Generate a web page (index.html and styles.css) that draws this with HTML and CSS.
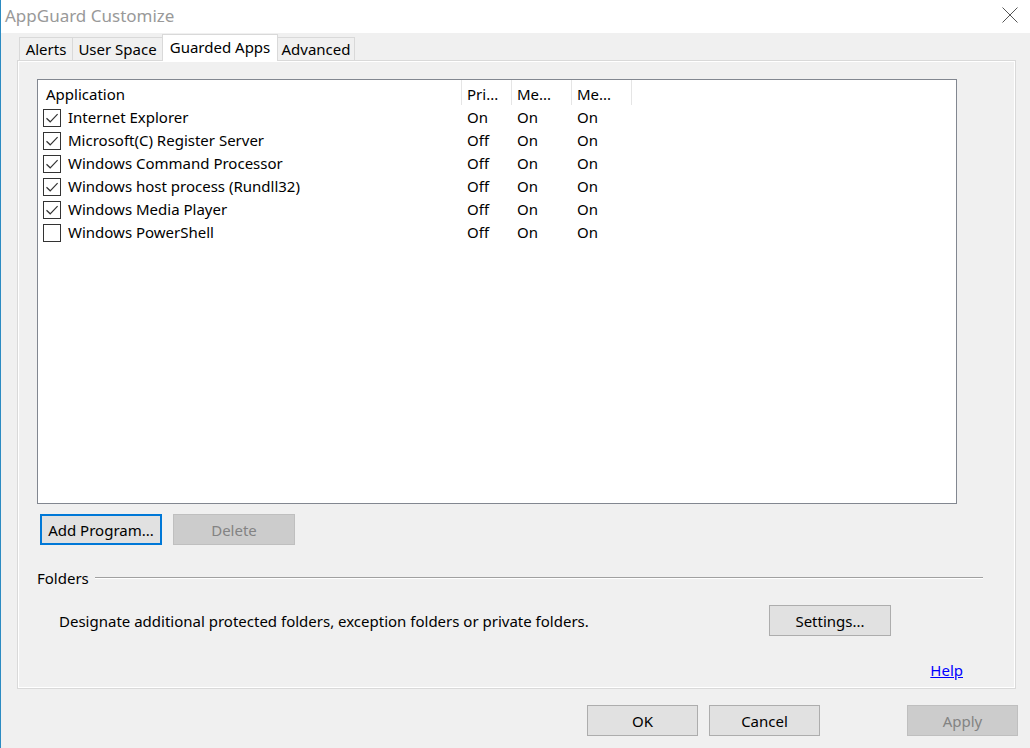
FILE: index.html
```html
<!DOCTYPE html>
<html lang="en">
<head>
<meta charset="utf-8">
<title>AppGuard Customize</title>
<link rel="stylesheet" href="styles.css">
</head>
<body>
<div class="window">
  <header class="titlebar">
    <span class="title">AppGuard Customize</span>
    <svg class="close" viewBox="0 0 16 16" aria-label="Close">
      <path d="M0.5 0.5 L15.5 15.5 M15.5 0.5 L0.5 15.5" stroke="#555" stroke-width="1" fill="none"/>
    </svg>
  </header>

  <nav class="tabs">
    <div class="tab tab-alerts">Alerts</div>
    <div class="tab tab-user">User Space</div>
    <div class="tab tab-guarded active">Guarded Apps</div>
    <div class="tab tab-advanced">Advanced</div>
  </nav>

  <section class="panel">
    <div class="list">
      <div class="list-head">
        <div class="col col-app">Application</div>
        <div class="col">Pri...</div>
        <div class="col">Me...</div>
        <div class="col">Me...</div>
      </div>
      <div class="row">
        <div class="cell app"><span class="check on"></span>Internet Explorer</div>
        <div class="cell">On</div><div class="cell">On</div><div class="cell">On</div>
      </div>
      <div class="row">
        <div class="cell app"><span class="check on"></span>Microsoft(C) Register Server</div>
        <div class="cell">Off</div><div class="cell">On</div><div class="cell">On</div>
      </div>
      <div class="row">
        <div class="cell app"><span class="check on"></span>Windows Command Processor</div>
        <div class="cell">Off</div><div class="cell">On</div><div class="cell">On</div>
      </div>
      <div class="row">
        <div class="cell app"><span class="check on"></span>Windows host process (Rundll32)</div>
        <div class="cell">Off</div><div class="cell">On</div><div class="cell">On</div>
      </div>
      <div class="row">
        <div class="cell app"><span class="check on"></span>Windows Media Player</div>
        <div class="cell">Off</div><div class="cell">On</div><div class="cell">On</div>
      </div>
      <div class="row">
        <div class="cell app"><span class="check"></span>Windows PowerShell</div>
        <div class="cell">Off</div><div class="cell">On</div><div class="cell">On</div>
      </div>
    </div>

    <div class="actions">
      <button class="btn focused">Add Program...</button>
      <button class="btn" disabled>Delete</button>
    </div>

    <div class="group">
      <span>Folders</span>
      <span class="rule"></span>
    </div>

    <div class="folders">
      <span>Designate additional protected folders, exception folders or private folders.</span>
      <button class="btn settings">Settings...</button>
    </div>

    <div class="help"><a href="#">Help</a></div>
  </section>

  <footer class="dialog-buttons">
    <button class="btn wide">OK</button>
    <button class="btn wide">Cancel</button>
    <button class="btn wide apply" disabled>Apply</button>
  </footer>
</div>
</body>
</html>
```

FILE: styles.css
```css
html, body {
  margin: 0;
  padding: 0;
}

body {
  width: 1030px;
  height: 748px;
  overflow: hidden;
  background: #f0f0f0;
  color: #000;
  font-family: "Noto Sans", "Open Sans", sans-serif;
  font-size: 15px;
}

.window {
  height: 748px;
  box-sizing: border-box;
  border-left: 1px solid #2b8bc2;
  display: flex;
  flex-direction: column;
}

/* caption bar */
.titlebar {
  height: 33px;
  flex: none;
  background: #fff;
  display: flex;
  align-items: flex-start;
  justify-content: space-between;
  padding-left: 4px;
}

.title {
  font-size: 17px;
  line-height: 32px;
  color: #999;
}

.close {
  width: 16px;
  height: 16px;
  margin: 7px 12px 0 0;
}

/* tab strip */
.tabs {
  display: flex;
  align-items: flex-end;
  height: 27px;
  margin: 1px 0 -1px 18px;
  position: relative;
  z-index: 1;
}

.tab {
  height: 23px;
  box-sizing: border-box;
  border: 1px solid #d9d9d9;
  border-bottom: none;
  background: #f0f0f0;
  margin-right: -1px;
  margin-bottom: 1px;
  line-height: 22px;
  text-align: center;
  white-space: nowrap;
}

.tab-alerts { width: 54px; }
.tab-user { width: 91px; }
.tab-guarded { width: 116px; }
.tab-advanced { width: 78px; }

.tab.active {
  height: 27px;
  margin-bottom: 0;
  padding-top: 1px;
  background: #fff;
  position: relative;
  z-index: 2;
}

/* tab page */
.panel {
  margin-left: 16px;
  width: 999px;
  height: 629px;
  flex: none;
  box-sizing: border-box;
  border: 1px solid #d9d9d9;
  box-shadow: inset 0 0 0 1px #fff;
  padding: 18px 31px 0 19px;
  display: flex;
  flex-direction: column;
}

/* application list */
.list {
  width: 920px;
  height: 425px;
  flex: none;
  box-sizing: border-box;
  border: 1px solid #828790;
  background: #fff;
}

.list-head,
.row {
  display: grid;
  grid-template-columns: 424px 50px 60px 60px;
}

.list-head {
  margin-bottom: 1px;
}

.list-head .col {
  height: 25px;
  box-sizing: border-box;
  padding: 3px 0 0 5px;
  line-height: 22px;
  border-right: 1px solid #e5e5e5;
  white-space: nowrap;
}

.list-head .col-app {
  padding-left: 8px;
}

.row {
  height: 23px;
  line-height: 23px;
}

.cell {
  padding-left: 5px;
  white-space: nowrap;
}

.cell.app {
  display: flex;
  align-items: center;
  gap: 7px;
}

.check {
  width: 18px;
  height: 18px;
  flex: none;
  box-sizing: border-box;
  border: 1px solid #333;
  background: #fff;
}

.check.on {
  background: #fff url("data:image/svg+xml;utf8,<svg xmlns='http://www.w3.org/2000/svg' viewBox='0 0 16 16'><path d='M2.5 8.2 L6.2 11.8 L13.6 4.2' fill='none' stroke='%23333' stroke-width='1.2'/></svg>") center / 16px 16px no-repeat;
}

/* buttons */
.btn {
  width: 122px;
  height: 31px;
  box-sizing: border-box;
  border: 1px solid #adadad;
  background: #e1e1e1;
  color: #000;
  font: inherit;
  padding: 0;
  margin: 0;
}

.btn.focused {
  border: 2px solid #0078d7;
}

.btn:disabled {
  background: #cccccc;
  border-color: #bfbfbf;
  color: #838383;
}

.actions {
  display: flex;
  gap: 11px;
  margin: 10px 0 0 3px;
}

/* folders group */
.group {
  display: flex;
  align-items: center;
  gap: 6px;
  height: 22px;
  line-height: 22px;
  margin-top: 22px;
}

.group .rule {
  flex: 1;
  margin-right: 1px;
  border-top: 1px solid #a0a0a0;
  border-bottom: 1px solid #fff;
}

.folders {
  display: flex;
  align-items: center;
  height: 31px;
  margin-top: 16px;
  padding: 0 93px 0 22px;
}

.folders .settings {
  margin-left: auto;
}

.help {
  margin-top: 24px;
  line-height: 20px;
  text-align: right;
  padding-right: 21px;
}

.help a {
  color: #0000ff;
  text-decoration: underline;
}

/* dialog buttons */
.dialog-buttons {
  display: flex;
  justify-content: flex-end;
  gap: 11px;
  margin-top: 16px;
  padding-right: 12px;
}

.btn.wide {
  width: 111px;
}

.btn.apply {
  margin-left: 76px;
}
```
